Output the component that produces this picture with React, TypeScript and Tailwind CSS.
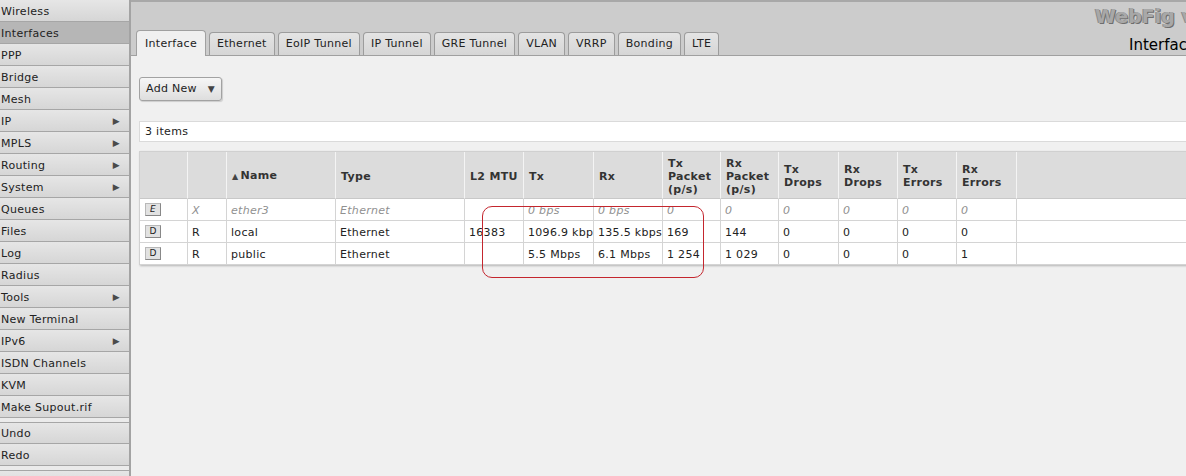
import React from 'react';

const menu: { label: string; arrow?: boolean; active?: boolean; gap?: boolean }[] = [
  { label: 'Wireless' },
  { label: 'Interfaces', active: true },
  { label: 'PPP' },
  { label: 'Bridge' },
  { label: 'Mesh' },
  { label: 'IP', arrow: true },
  { label: 'MPLS', arrow: true },
  { label: 'Routing', arrow: true },
  { label: 'System', arrow: true },
  { label: 'Queues' },
  { label: 'Files' },
  { label: 'Log' },
  { label: 'Radius' },
  { label: 'Tools', arrow: true },
  { label: 'New Terminal' },
  { label: 'IPv6', arrow: true },
  { label: 'ISDN Channels' },
  { label: 'KVM' },
  { label: 'Make Supout.rif' },
  { label: 'Undo', gap: true },
  { label: 'Redo' },
  { label: 'Logout', gap: true },
];

const tabs = ['Interface', 'Ethernet', 'EoIP Tunnel', 'IP Tunnel', 'GRE Tunnel', 'VLAN', 'VRRP', 'Bonding', 'LTE'];

const colWidths = [48, 39, 109, 129, 59, 70, 69, 58, 58, 60, 59, 59, 60];

const headers: React.ReactNode[] = [
  '',
  '',
  <span key="n">
    <span className="mr-[2px] text-[8px] text-[#444]">▲</span>Name
  </span>,
  'Type',
  'L2 MTU',
  'Tx',
  'Rx',
  <span key="tp">Tx<br />Packet<br />(p/s)</span>,
  <span key="rp">Rx<br />Packet<br />(p/s)</span>,
  <span key="td">Tx<br />Drops</span>,
  <span key="rd">Rx<br />Drops</span>,
  <span key="te">Tx<br />Errors</span>,
  <span key="re">Rx<br />Errors</span>,
];

const rows = [
  { btn: 'E', disabled: true, cells: ['X', 'ether3', 'Ethernet', '', '0 bps', '0 bps', '0', '0', '0', '0', '0', '0'] },
  { btn: 'D', disabled: false, cells: ['R', 'local', 'Ethernet', '16383', '1096.9 kbps', '135.5 kbps', '169', '144', '0', '0', '0', '0'] },
  { btn: 'D', disabled: false, cells: ['R', 'public', 'Ethernet', '', '5.5 Mbps', '6.1 Mbps', '1 254', '1 029', '0', '0', '0', '1'] },
];

export default function App() {
  return (
    <div className="flex h-[476px] w-[1186px] overflow-hidden bg-[#f0f0f0] font-['DejaVu_Sans',sans-serif] text-[11px] tracking-[0.3px] text-[#222]">
      {/* sidebar */}
      <div className="flex w-[131px] shrink-0 flex-col border-r-2 border-[#a3a3a3] bg-[#ebebeb]">
        {menu.map((m) => (
          <div
            key={m.label}
            className={`flex h-[22px] shrink-0 items-center justify-between border-b border-[#a6a6a6] pl-[1px] pr-[9px] pt-[3px] ${
              m.gap ? 'mt-[4px] border-t' : ''
            } ${m.active ? 'bg-[#b6b6b6]' : 'bg-gradient-to-b from-[#e6e6e6] to-[#d6d6d6]'}`}
          >
            <span>{m.label}</span>
            {m.arrow && <span className="text-[9px] text-[#4a4a4a]">▶</span>}
          </div>
        ))}
      </div>

      {/* main */}
      <div className="flex w-[1120px] shrink-0 flex-col">
        <div className="flex h-[56px] shrink-0 border-t-2 border-b border-t-[#a8a8a8] border-b-[#a0a0a0] bg-[#cccccc]">
          <div className="flex w-[964px] shrink-0 items-end gap-[3px] pl-[5px]">
            {tabs.map((t, i) =>
              i === 0 ? (
                <div
                  key={t}
                  className="relative -mb-px flex h-[26px] items-center rounded-t-[4px] border border-b-0 border-[#a0a0a0] bg-[#f0f0f0] px-[8px] pt-[1px]"
                >
                  {t}
                </div>
              ) : (
                <div
                  key={t}
                  className="flex h-[23px] items-center rounded-t-[4px] border border-b-0 border-[#9c9c9c] bg-gradient-to-b from-[#e4e4e4] to-[#d6d6d6] px-[7px] pt-[1px]"
                >
                  {t}
                </div>
              )
            )}
          </div>
          <div className="flex flex-col whitespace-nowrap">
            <div className="mt-[2px] text-[19px] font-bold leading-[24px] tracking-normal text-[#a8a8a8] [text-shadow:1px_1px_0_#6e6e6e,-1px_0_0_#8a8a8a]">
              WebFig v6.40
            </div>
            <div className="mt-[8px] pl-[34px] text-[15px] leading-[18px] tracking-normal text-black">Interface List</div>
          </div>
        </div>

        <div className="flex flex-col pl-[8px] pt-[21px]">
          <button className="flex h-[24px] w-[83px] items-center justify-between rounded-[3px] border border-[#a2a2a2] bg-gradient-to-b from-[#f6f6f6] to-[#dedede] pl-[6px] pr-[6px] pt-[1px] shadow-[1px_1px_1px_rgba(0,0,0,0.15)]">
            <span>Add New</span>
            <span className="text-[9px] text-[#444]">▼</span>
          </button>

          <div className="mt-[20px] flex h-[21px] items-center border border-[#dadada] bg-white pl-[5px] pt-[2px]">3 items</div>

          <div className="relative mt-[9px]">
            <table className="w-[1100px] table-fixed border-separate border-spacing-0 border-l border-t border-[#d0d0d0] bg-white shadow-[1px_1px_2px_rgba(0,0,0,0.25)]">
              <colgroup>
                {colWidths.map((w, i) => (
                  <col key={i} style={{ width: w }} />
                ))}
                <col />
              </colgroup>
              <thead>
                <tr className="h-[47px]">
                  {headers.map((h, i) => (
                    <th
                      key={i}
                      className="border-r border-b border-r-[#f4f4f4] border-b-[#c8c8c8] bg-[#dcdcdc] pl-[5px] pt-[2px] text-left align-middle font-bold leading-[13px] text-[#333]"
                    >
                      {h}
                    </th>
                  ))}
                  <th className="border-b border-[#c8c8c8] bg-[#dcdcdc]" />
                </tr>
              </thead>
              <tbody>
                {rows.map((r, ri) => (
                  <tr key={ri} className="h-[22px]">
                    <td className="border-r border-b border-[#d4d4d4] pl-[5px]">
                      <span
                        className={`flex h-[13px] w-[16px] items-center justify-center border border-[#b8b8b8] border-r-[#888] border-b-[#888] bg-[#e2e2e2] text-[9px] leading-none ${
                          r.disabled ? 'italic' : ''
                        }`}
                      >
                        {r.btn}
                      </span>
                    </td>
                    {r.cells.map((c, ci) => (
                      <td
                        key={ci}
                        className={`overflow-hidden whitespace-nowrap border-r border-b border-[#d4d4d4] pl-[4px] pt-[3px] ${
                          r.disabled ? 'italic text-[#909090]' : ''
                        }`}
                      >
                        {c}
                      </td>
                    ))}
                    <td className="border-b border-[#d4d4d4]" />
                  </tr>
                ))}
              </tbody>
            </table>
            <div className="pointer-events-none absolute left-[343px] top-[55px] h-[72px] w-[222px] rounded-[10px] border border-[#c4262e]" />
          </div>
        </div>
      </div>
    </div>
  );
}
